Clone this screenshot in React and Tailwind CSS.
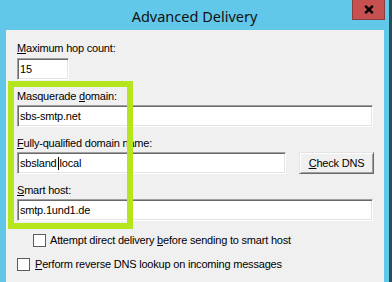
import React from "react";

const tb =
  "bg-white border border-t-[#a0a0a0] border-l-[#a0a0a0] border-r-white border-b-white shadow-[inset_1px_1px_0_#696969,inset_-1px_-1px_0_#e3e3e3] h-[22px] flex items-center pl-[2px] text-black";

function Label({ children }) {
  return <div className="h-[13px] leading-[13px] text-black">{children}</div>;
}

function Check() {
  return <div className="w-[13px] h-[13px] bg-white border border-[#5a5a5a] shrink-0" />;
}

export default function App() {
  return (
    <div
      className="w-[392px] h-[282px] flex bg-[#62c8e9] overflow-hidden"
      style={{ fontFamily: '"Liberation Sans", Arial, sans-serif' }}
    >
      <div className="w-[389px] h-full flex flex-col">
        <div className="h-[30px] shrink-0 grid grid-cols-[1fr_auto_1fr]">
          <div />
          <div
            className="self-center text-[14.5px] leading-[20px] text-[#111] pt-[1px]"
            style={{ fontFamily: '"Noto Sans", "Open Sans", sans-serif' }}
          >
            Advanced Delivery
          </div>
          <div className="flex justify-end items-start">
            <div className="w-[33px] h-[20px] mr-[4px] bg-[#c75050] border border-t-0 border-[#8a3d3d] flex items-center justify-center">
              <svg width="10" height="9" viewBox="0 0 10 9">
                <path d="M1.2 0.8 L8.8 8.2 M8.8 0.8 L1.2 8.2" stroke="#000" strokeWidth="2.4" fill="none" />
              </svg>
            </div>
          </div>
        </div>
        <div className="flex-1 flex">
          <div className="w-[6px]" />
          <div className="w-[378px] h-full bg-[#f0f0f0] relative pl-[11px] pt-[12px] text-[11px] tracking-[-0.2px]">
            <Label>
              <u>M</u>aximum hop count:
            </Label>
            <div className={`${tb} w-[52px] mt-[3px]`}>15</div>

            <div className="mt-[10px]">
              <Label>
                Masquerade <u>d</u>omain:
              </Label>
            </div>
            <div className={`${tb} w-[356px] mt-[2px]`}>sbs-smtp.net</div>

            <div className="mt-[10px]">
              <Label>
                <u>F</u>ully-qualified domain name:
              </Label>
            </div>
            <div className="flex mt-[2px] gap-[13px]">
              <div className={`${tb} w-[269px]`}>
                sbsland
                <span className="inline-block w-px h-[13px] bg-black mx-px" />
                local
              </div>
              <div className="w-[75px] h-[22px] bg-[#f0f0f0] border border-t-[#e3e3e3] border-l-[#e3e3e3] border-r-[#696969] border-b-[#696969] shadow-[inset_1px_1px_0_#ffffff,inset_-1px_-1px_0_#a0a0a0] flex items-center justify-center text-black">
                <span>
                  <u>C</u>heck DNS
                </span>
              </div>
            </div>

            <div className="mt-[10px]">
              <Label>
                <u>S</u>mart host:
              </Label>
            </div>
            <div className={`${tb} w-[356px] mt-[2px]`}>smtp.1und1.de</div>

            <div className="flex items-center gap-[4px] ml-[16px] mt-[13px] h-[13px] text-black">
              <Check />
              <span>
                Attempt direct delivery <u>b</u>efore sending to smart host
              </span>
            </div>
            <div className="flex items-center gap-[5px] mt-[11px] h-[13px] text-black">
              <Check />
              <span>
                <u>P</u>erform reverse DNS lookup on incoming messages
              </span>
            </div>

            <div className="absolute left-[2px] top-[51px] w-[125px] h-[148px] border-[6px] border-[#b5e61d] pointer-events-none" />
          </div>
          <div className="w-[5px]" />
        </div>
      </div>
      <div className="w-[3px] h-full bg-[#2e4b5a]" />
    </div>
  );
}
